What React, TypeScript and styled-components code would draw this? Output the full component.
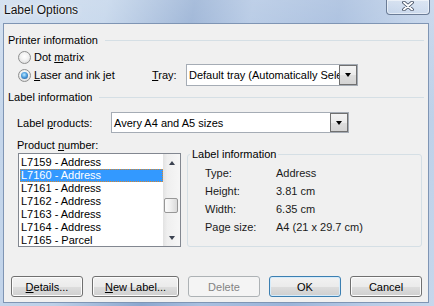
import React from 'react'
import styled, { createGlobalStyle, css } from 'styled-components'

const products = [
  'L7159 - Address',
  'L7160 - Address',
  'L7161 - Address',
  'L7162 - Address',
  'L7163 - Address',
  'L7164 - Address',
  'L7165 - Parcel',
]

const details = [
  ['Type:', 'Address'],
  ['Height:', '3.81 cm'],
  ['Width:', '6.35 cm'],
  ['Page size:', 'A4 (21 x 29.7 cm)'],
]

const GlobalStyle = createGlobalStyle`
  html, body { margin: 0; padding: 0; }
  body {
    width: 434px;
    height: 306px;
    overflow: hidden;
    font-family: "Liberation Sans", Arial, sans-serif;
    font-size: 11px;
    color: #000;
  }
`

const Window = styled.div`
  width: 434px;
  height: 306px;
  box-sizing: border-box;
  display: flex;
  flex-direction: column;
  padding: 0 5px 3px 3px;
  background:
    linear-gradient(180deg, rgba(255, 255, 255, 0.25), rgba(255, 255, 255, 0) 40%),
    linear-gradient(100deg, #c8d8ec 0%, #bcd0e8 22%, #8ba7cf 40%, #a9c0e0 52%, #9ab4d9 70%, #b7cbe6 86%, #c6d7ec 100%);
`

const TitleBar = styled.div`
  height: 23px;
  display: flex;
  align-items: flex-start;
`

const Title = styled.div`
  padding: 3px 0 0 1px;
  line-height: 14px;
  font-size: 12px;
  color: #111;
  text-shadow: 0 0 6px rgba(255, 255, 255, 0.9), 0 0 2px rgba(255, 255, 255, 0.8);
`

const CloseButton = styled.div`
  margin-left: auto;
  margin-right: -1px;
  width: 44px;
  height: 15px;
  box-sizing: border-box;
  border: 1px solid #6b7c96;
  border-top: none;
  border-radius: 0 0 4px 4px;
  background: linear-gradient(180deg, rgba(255, 255, 255, 0.35), rgba(255, 255, 255, 0.1));
  box-shadow: inset 0 0 0 1px rgba(255, 255, 255, 0.5);
  display: flex;
  justify-content: center;
  align-items: flex-start;
  padding-top: 1px;
`

const Client = styled.div`
  flex: 1;
  box-sizing: border-box;
  border: 1px solid #7f95b4;
  background: #f0f0f0;
  padding: 8px 4px 0 4px;
  display: flex;
  flex-direction: column;
`

const Heading = styled.div<{ $top?: number }>`
  display: flex;
  align-items: center;
  gap: 7px;
  height: 16px;
  margin-top: ${(p) => p.$top ?? 0}px;
  white-space: nowrap;

  &::after {
    content: '';
    flex: 1;
    border-top: 1px solid #d5dfe5;
  }
`

const Row = styled.div<{ $top: number; $height: number; $indent: number }>`
  display: flex;
  align-items: center;
  height: ${(p) => p.$height}px;
  margin: ${(p) => p.$top}px 0 0 ${(p) => p.$indent}px;
`

const Option = styled.label<{ $width?: number }>`
  display: flex;
  align-items: center;
  gap: 3px;
  width: ${(p) => (p.$width ? `${p.$width}px` : 'auto')};
  white-space: nowrap;
`

const Radio = styled.span<{ $checked?: boolean }>`
  width: 13px;
  height: 13px;
  box-sizing: border-box;
  border-radius: 50%;
  border: 1px solid #8e8f8f;
  background: radial-gradient(circle at 50% 40%, #ffffff 0%, #f2f2f2 45%, #d2d2d2 100%);
  display: flex;
  align-items: center;
  justify-content: center;

  &::after {
    content: '';
    width: 7px;
    height: 7px;
    border-radius: 50%;
    display: ${(p) => (p.$checked ? 'block' : 'none')};
    background: radial-gradient(circle at 45% 40%, #c0ebff 0%, #4f9fe0 45%, #1b4a85 100%);
  }
`

const FieldLabel = styled.span<{ $width: number }>`
  width: ${(p) => p.$width}px;
  white-space: nowrap;
`

const Combo = styled.div<{ $width: number; $height: number }>`
  width: ${(p) => p.$width}px;
  height: ${(p) => p.$height}px;
  box-sizing: border-box;
  border: 1px solid #a5acb5;
  background: #fff;
  display: flex;
`

const ComboText = styled.span`
  flex: 1;
  min-width: 0;
  padding-left: 2px;
  display: flex;
  align-items: center;
  white-space: nowrap;
  overflow: hidden;
`

const DropButton = styled.span`
  width: 18px;
  box-sizing: border-box;
  border: 1px solid #707070;
  background: linear-gradient(180deg, #f4f4f4 0%, #ebebeb 50%, #dedede 51%, #d4d4d4 100%);
  display: flex;
  align-items: center;
  justify-content: center;

  &::before {
    content: '';
    border-left: 3.5px solid transparent;
    border-right: 3.5px solid transparent;
    border-top: 4px solid #000;
  }
`

const Caption = styled.div`
  margin: 5px 0 0 9px;
  height: 14px;
  line-height: 14px;
`

const ListArea = styled.div`
  display: flex;
  gap: 6px;
  height: 94px;
  margin: 1px 0 0 10px;
`

const ListBox = styled.div`
  width: 163px;
  box-sizing: border-box;
  border: 1px solid #828790;
  background: #fff;
  display: flex;
`

const Items = styled.div`
  flex: 1;
  min-width: 0;
  padding: 2px 0 0 1px;
  overflow: hidden;
`

const Item = styled.div<{ $selected?: boolean }>`
  height: 13px;
  line-height: 13px;
  padding-left: 1px;
  box-sizing: border-box;
  white-space: nowrap;
  ${(p) =>
    p.$selected &&
    css`
      background: #3399ff;
      color: #fff;
      outline: 1px dotted #d8862a;
      outline-offset: -1px;
    `}
`

const ScrollBar = styled.div`
  width: 17px;
  display: flex;
  flex-direction: column;
  background: linear-gradient(90deg, #e2e2e2 0%, #efefef 25%, #f6f6f6 100%);
`

const ScrollArrow = styled.div<{ $down?: boolean }>`
  height: 17px;
  display: flex;
  align-items: center;
  justify-content: center;

  &::before {
    content: '';
    border-left: 3.5px solid transparent;
    border-right: 3.5px solid transparent;
    ${(p) =>
      p.$down
        ? css`border-top: 4px solid #3b4250;`
        : css`border-bottom: 4px solid #3b4250;`}
  }
`

const Track = styled.div`
  flex: 1;
  padding-top: 27px;
`

const Thumb = styled.div`
  height: 15px;
  margin: 0 2px 0 1px;
  box-sizing: border-box;
  border: 1px solid #979797;
  border-radius: 2px;
  background: linear-gradient(90deg, #fbfbfb 0%, #f0f0f0 45%, #dadada 100%);
`

const GroupBox = styled.fieldset`
  margin: -6px 0 0 0;
  padding: 0;
  width: 235px;
  min-width: 0;
  box-sizing: border-box;
  border: 1px solid #d5dfe5;
  border-radius: 3px;
`

const GroupTitle = styled.legend`
  margin-left: 2px;
  padding: 0 2px;
  line-height: 14px;
`

const InfoGrid = styled.div`
  display: grid;
  grid-template-columns: 71px auto;
  grid-auto-rows: 18px;
  align-items: center;
  margin-top: 3px;
  padding-left: 17px;
  color: #1a1a1a;
`

const ButtonBar = styled.div`
  display: flex;
  gap: 9px;
  margin: 29px 0 0 3px;
`

const Button = styled.button<{ $width?: number; $primary?: boolean }>`
  width: ${(p) => p.$width ?? 72}px;
  height: 21px;
  padding: 0;
  box-sizing: border-box;
  font: inherit;
  color: #000;
  border: 1px solid #707070;
  border-radius: 3px;
  background: linear-gradient(180deg, #f2f2f2 0%, #ebebeb 50%, #dddddd 51%, #cfcfcf 100%);
  box-shadow: inset 0 0 0 1px #fcfcfc;
  ${(p) =>
    p.$primary &&
    css`
      border-color: #3c7fb1;
      box-shadow: inset 0 0 0 1px #d6ecfb;
    `}

  &:disabled {
    color: #838383;
    border-color: #adb2b5;
    background: #f4f4f4;
    box-shadow: none;
  }
`

const CloseGlyph = () => (
  <svg width="12" height="10" viewBox="0 0 12 10">
    <path d="M2 1.5 L10 8.5 M10 1.5 L2 8.5" stroke="#3a4559" strokeWidth="3.6" strokeLinecap="round" />
    <path d="M2 1.5 L10 8.5 M10 1.5 L2 8.5" stroke="#fff" strokeWidth="2" strokeLinecap="round" />
  </svg>
)

const App = () => {
  return (
    <Window>
      <GlobalStyle />
      <TitleBar>
        <Title>Label Options</Title>
        <CloseButton>
          <CloseGlyph />
        </CloseButton>
      </TitleBar>
      <Client>
        <Heading>Printer information</Heading>
        <Row $top={2} $height={14} $indent={10}>
          <Option>
            <Radio />
            <span>Dot <u>m</u>atrix</span>
          </Option>
        </Row>
        <Row $top={0} $height={22} $indent={10}>
          <Option $width={134}>
            <Radio $checked />
            <span><u>L</u>aser and ink jet</span>
          </Option>
          <FieldLabel $width={34}><u>T</u>ray:</FieldLabel>
          <Combo $width={172} $height={22}>
            <ComboText>Default tray (Automatically Select)</ComboText>
            <DropButton />
          </Combo>
        </Row>
        <Heading $top={3}>Label information</Heading>
        <Row $top={7} $height={21} $indent={9}>
          <FieldLabel $width={94}>Label <u>p</u>roducts:</FieldLabel>
          <Combo $width={238} $height={21}>
            <ComboText>Avery A4 and A5 sizes</ComboText>
            <DropButton />
          </Combo>
        </Row>
        <Caption>Product <u>n</u>umber:</Caption>
        <ListArea>
          <ListBox>
            <Items>
              {products.map((p, i) => (
                <Item key={p} $selected={i === 1}>{p}</Item>
              ))}
            </Items>
            <ScrollBar>
              <ScrollArrow />
              <Track>
                <Thumb />
              </Track>
              <ScrollArrow $down />
            </ScrollBar>
          </ListBox>
          <GroupBox>
            <GroupTitle>Label information</GroupTitle>
            <InfoGrid>
              {details.map(([k, v]) => (
                <React.Fragment key={k}>
                  <span>{k}</span>
                  <span>{v}</span>
                </React.Fragment>
              ))}
            </InfoGrid>
          </GroupBox>
        </ListArea>
        <ButtonBar>
          <Button><u>D</u>etails...</Button>
          <Button $width={87}><u>N</u>ew Label...</Button>
          <Button disabled>Delete</Button>
          <Button $primary>OK</Button>
          <Button>Cancel</Button>
        </ButtonBar>
      </Client>
    </Window>
  )
}

export default App
